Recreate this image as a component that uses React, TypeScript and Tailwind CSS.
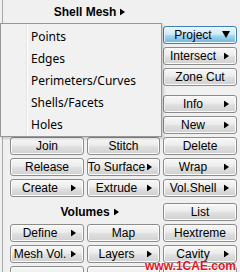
import React from 'react';

const Arrow = ({ down }: { down?: boolean }) =>
  down ? (
    <svg width="8" height="7" viewBox="0 0 8 7" className="absolute right-[6px] top-[4px]">
      <polygon points="0,0 8,0 4,7" fill="#000" />
    </svg>
  ) : (
    <svg width="5" height="7" viewBox="0 0 5 7" className="absolute right-[7px] top-1/2 -translate-y-1/2">
      <polygon points="0,0 5,3.5 0,7" fill="#000" />
    </svg>
  );

const Btn = ({
  label,
  arrow,
  down,
  blue,
}: {
  label?: string;
  arrow?: boolean;
  down?: boolean;
  blue?: boolean;
}) => (
  <div
    className={
      'relative h-[18px] rounded-[3px] border flex items-center justify-center text-[12px] leading-none text-black whitespace-nowrap ' +
      (blue
        ? 'border-[#3c7fb1] bg-[linear-gradient(#eaf6fd,#cfeafa_45%,#a4d5f1_55%,#6cb5e0)] shadow-[inset_0_0_0_1px_#f4fbff]'
        : 'border-[#8c8c8c] bg-[linear-gradient(#f8f8f8,#ececec_45%,#dfdfdf_55%,#d0d0d0)] shadow-[inset_0_0_0_1px_#fbfbfb]') +
      (arrow || down ? ' pr-[14px]' : '')
    }
  >
    {label}
    {(arrow || down) && <Arrow down={down} />}
  </div>
);

const Title = ({ text }: { text: string }) => (
  <div className="col-span-2 flex items-center justify-center">
    <span className="relative text-[12px] font-bold leading-none text-black">
      {text}
      <svg width="5" height="7" viewBox="0 0 5 7" className="absolute left-full top-1/2 ml-[4px] -translate-y-1/2">
        <polygon points="0,0 5,3.5 0,7" fill="#000" />
      </svg>
    </span>
  </div>
);

const Row = ({ children, className = '' }: { children: React.ReactNode; className?: string }) => (
  <div className={'shrink-0 grid grid-cols-[74px_73px_74px] gap-x-[3px] ' + className}>{children}</div>
);

const menuItems = ['Points', 'Edges', 'Perimeters/Curves', 'Shells/Facets', 'Holes'];

export default function App() {
  return (
    <div className="relative w-[240px] h-[272px] overflow-hidden bg-[#f0f0f0] font-['Liberation_Sans',Arial,sans-serif]">
      <div className="h-full pl-[2px]">
        <div className="h-full border-l border-[#a8a8a8] pl-[7px] flex flex-col gap-[3px]">
          <Row className="h-[23px]">
            <Title text="Shell Mesh" />
          </Row>
          <Row>
            <div />
            <div />
            <Btn label="Project" down blue />
          </Row>
          <Row>
            <div />
            <div />
            <Btn label="Intersect" arrow />
          </Row>
          <Row>
            <div />
            <div />
            <Btn label="Zone Cut" />
          </Row>
          <Row className="mt-[6px]">
            <div />
            <div />
            <Btn label="Info" arrow />
          </Row>
          <Row>
            <div />
            <div />
            <Btn label="New" arrow />
          </Row>
          <Row>
            <Btn label="Join" />
            <Btn label="Stitch" />
            <Btn label="Delete" />
          </Row>
          <Row>
            <Btn label="Release" />
            <Btn label="To Surface" arrow />
            <Btn label="Wrap" arrow />
          </Row>
          <Row>
            <Btn label="Create" arrow />
            <Btn label="Extrude" arrow />
            <Btn label="Vol.Shell" arrow />
          </Row>
          <Row className="mt-[3px]">
            <Title text="Volumes" />
            <Btn label="List" />
          </Row>
          <Row>
            <Btn label="Define" arrow />
            <Btn label="Map" />
            <Btn label="Hextreme" />
          </Row>
          <Row>
            <Btn label="Mesh Vol." arrow />
            <Btn label="Layers" arrow />
            <Btn label="Cavity" arrow />
          </Row>
          <Row>
            <Btn />
            <Btn />
            <Btn />
          </Row>
        </div>
      </div>

      {/* popup menu over the panel */}
      <div className="absolute left-0 top-[23px] w-[162px] h-[114px] border border-[#979797] bg-[#f1f1f1] shadow-[2px_2px_2px_rgba(0,0,0,0.15)] font-['Noto_Sans',sans-serif]">
        <div className="absolute left-[25px] top-0 bottom-0 w-[1px] bg-[#e2e3e3]" />
        <div className="absolute left-[26px] top-0 bottom-0 w-[1px] bg-white" />
        <div className="relative pt-[2px] pl-[30px]">
          {menuItems.map((m) => (
            <div key={m} className="h-[22px] flex items-center text-[12px] leading-none text-black">
              {m}
            </div>
          ))}
        </div>
      </div>

      <div className="absolute left-[145px] top-[260px] text-[12px] font-bold leading-none text-[#e5121b] [text-shadow:0_0_2px_#fff,0_0_1px_#fff]">
        www.1CAE.com
      </div>
    </div>
  );
}
